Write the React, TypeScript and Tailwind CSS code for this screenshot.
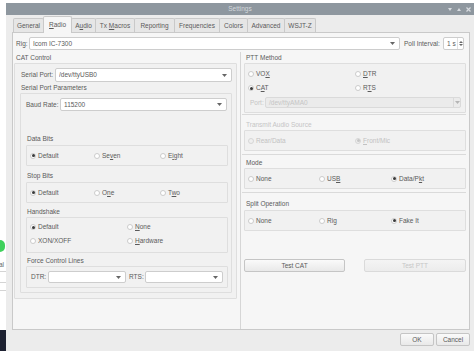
import React from "react";

const tabs = [
  { t: "General", w: 31 },
  { t: "Radio", w: 29, u: 0, active: true },
  { t: "Audio", w: 25, u: 1 },
  { t: "Tx Macros", w: 40, u: 3 },
  { t: "Reporting", w: 41 },
  { t: "Frequencies", w: 46 },
  { t: "Colors", w: 29 },
  { t: "Advanced", w: 38 },
  { t: "WSJT-Z", w: 32 },
];

function Mn({ t, u }: { t: string; u?: number }) {
  if (u === undefined) return <span className="whitespace-pre">{t}</span>;
  return (
    <span className="whitespace-pre">
      {t.slice(0, u)}
      <span className="underline underline-offset-1">{t[u]}</span>
      {t.slice(u + 1)}
    </span>
  );
}

function Caret({ light }: { light?: boolean }) {
  return (
    <svg width="5" height="3" viewBox="0 0 5 3" className="shrink-0">
      <path d="M0 0 L5 0 L2.5 3 Z" fill={light ? "#b5b5b5" : "#666"} />
    </svg>
  );
}

function Combo({ value, className }: { value?: string; className: string }) {
  return (
    <div
      className={`flex items-center bg-white border border-[#cdcdcd] rounded-[2px] pl-[3px] pr-[4px] ${className}`}
    >
      <span className="flex-1 truncate">{value}</span>
      <Caret />
    </div>
  );
}

function Radio({
  t,
  u,
  checked,
  disabled,
  className = "",
}: {
  t: string;
  u?: number;
  checked?: boolean;
  disabled?: boolean;
  className?: string;
}) {
  return (
    <div className={`flex items-center gap-[2px] h-[12px] ${disabled ? "text-[#c2c2c2]" : ""} ${className}`}>
      <span
        className={`w-[6px] h-[6px] rounded-full border flex items-center justify-center ${
          disabled ? "border-[#d6d6d6] bg-[#efefef]" : "border-[#cbcbcb] bg-white"
        }`}
      >
        {checked && (
          <span className={`w-[3px] h-[3px] rounded-full ${disabled ? "bg-[#c6c6c6]" : "bg-[#3a3a3a]"}`} />
        )}
      </span>
      <Mn t={t} u={u} />
    </div>
  );
}

function Label({ children, className = "" }: { children: React.ReactNode; className?: string }) {
  return <div className={`h-[10px] leading-[10px] ${className}`}>{children}</div>;
}

function Frame({ children, className = "" }: { children: React.ReactNode; className?: string }) {
  return (
    <div className={`border border-[#dedede] rounded-[1px] bg-[#f1f1f1] ${className}`}>{children}</div>
  );
}

function Button({ children, className = "", disabled }: { children: React.ReactNode; className?: string; disabled?: boolean }) {
  return (
    <div
      className={`h-[13px] flex items-center justify-center border rounded-[2px] bg-gradient-to-b ${
        disabled
          ? "from-[#f4f4f4] to-[#ececec] border-[#dadada] text-[#c6c6c6]"
          : "from-[#fafafa] to-[#e9e9e9] border-[#c5c5c5]"
      } ${className}`}
    >
      {children}
    </div>
  );
}

export default function App() {
  return (
    <div className="relative w-[474px] h-[351px] overflow-hidden bg-white font-['Liberation_Sans',Arial,sans-serif] text-[6.5px] text-[#5a5a5a]">
      {/* desktop behind the dialog */}
      <div className="absolute left-[-5px] top-[240px] w-[10px] h-[12px] rounded-full bg-[#3fd15c]" />
      <div className="absolute left-[-1px] top-[260px] text-[#666]">al</div>
      <div className="absolute left-0 top-[271px] w-[6px] h-[1px] bg-[#d4d4d4]" />
      <div className="absolute left-0 top-[282px] w-[6px] h-[1px] bg-[#d4d4d4]" />
      <div className="absolute left-0 top-[290px] w-[6px] h-[1px] bg-[#d4d4d4]" />
      <div className="absolute left-0 top-[330px] w-[6px] h-[21px] bg-[#1d2131]" />

      {/* dialog window */}
      <div className="absolute left-[6px] top-[3px] w-[468px] h-[348px] flex flex-col bg-[#ececec]">
        <div className="relative h-[12px] bg-[#8e979f] flex items-center justify-center text-[#d3d8dc]">
          Settings
          <div className="absolute right-[3px] top-0 h-[12px] flex items-center gap-[5px]">
            <svg width="4" height="3" viewBox="0 0 4 3">
              <path d="M0 0 L4 0 L2 3 Z" fill="#d6dadf" />
            </svg>
            <svg width="4" height="3" viewBox="0 0 4 3">
              <path d="M0 3 L4 3 L2 0 Z" fill="#d6dadf" />
            </svg>
            <svg width="5" height="5" viewBox="0 0 5 5">
              <path d="M0.5 0.5 L4.5 4.5 M4.5 0.5 L0.5 4.5" stroke="#d6dadf" strokeWidth="1.2" />
            </svg>
          </div>
        </div>

        {/* tab bar */}
        <div className="h-[17px] pl-[7px] flex items-end">
          {tabs.map((tab) => (
            <div
              key={tab.t}
              style={{ width: tab.w }}
              className={`flex items-center justify-center border border-[#c9c9c9] rounded-t-[2px] -mr-[1px] ${
                tab.active
                  ? "h-[17px] bg-[#f6f6f6] border-b-0 relative z-10 -mb-[1px] pb-[1px]"
                  : "h-[14px] bg-[#e6e6e6] border-b-0"
              }`}
            >
              <Mn t={tab.t} u={tab.u} />
            </div>
          ))}
        </div>

        {/* tab pane */}
        <div className="ml-[6px] w-[458px] h-[298px] border border-[#c9c9c9] bg-[#f6f6f6] flex flex-col">
          <div className="mt-[4px] h-[13px] flex items-center pl-[3px]">
            <span className="w-[13px]">Rig:</span>
            <Combo value="Icom IC-7300" className="w-[371px] h-[13px]" />
            <span className="ml-[4px] w-[39px]">Poll Interval:</span>
            <div className="w-[21px] h-[13px] bg-white border border-[#cdcdcd] rounded-[2px] flex items-center pl-[3px]">
              <span className="flex-1">1 s</span>
              <div className="w-[6px] h-full border-l border-[#e0e0e0] flex flex-col items-center justify-center gap-[1px]">
                <svg width="4" height="2" viewBox="0 0 4 2">
                  <path d="M0 2 L4 2 L2 0 Z" fill="#666" />
                </svg>
                <svg width="4" height="2" viewBox="0 0 4 2">
                  <path d="M0 0 L4 0 L2 2 Z" fill="#666" />
                </svg>
              </div>
            </div>
          </div>

          <div className="mt-[2px] flex flex-1">
            {/* left column */}
            <div className="w-[227px] flex flex-col">
              <div className="h-[11px] leading-[11px] pl-[3px]">CAT Control</div>
              <Frame className="ml-[1px] w-[223px] h-[236px] flex flex-col">
                <div className="mt-[4px] h-[14px] flex items-center pl-[6px]">
                  <span className="w-[34px]">Serial Port:</span>
                  <Combo value="/dev/ttyUSB0" className="w-[177px] h-[14px]" />
                </div>
                <Label className="mt-[1px] pl-[6px]">Serial Port Parameters</Label>
                <Frame className="ml-[5px] w-[212px] h-[200px] flex flex-col">
                  <div className="mt-[4px] h-[13px] flex items-center pl-[5px]">
                    <span className="w-[34px]">Baud Rate:</span>
                    <Combo value="115200" className="w-[167px] h-[13px]" />
                  </div>

                  <Label className="mt-[23px] pl-[6px]">Data Bits</Label>
                  <Frame className="mt-[1px] ml-[5px] w-[202px] h-[21px] flex items-center pl-[3px]">
                    <Radio t="Default" checked className="w-[64px]" />
                    <Radio t="Seven" u={2} className="w-[66px]" />
                    <Radio t="Eight" u={1} />
                  </Frame>

                  <Label className="mt-[5px] pl-[6px]">Stop Bits</Label>
                  <Frame className="mt-[1px] ml-[5px] w-[202px] h-[21px] flex items-center pl-[3px]">
                    <Radio t="Default" checked className="w-[64px]" />
                    <Radio t="One" u={1} className="w-[66px]" />
                    <Radio t="Two" u={1} />
                  </Frame>

                  <Label className="mt-[4px] pl-[6px]">Handshake</Label>
                  <Frame className="ml-[5px] w-[202px] h-[36px] flex flex-col pl-[3px]">
                    <div className="mt-[3px] flex">
                      <Radio t="Default" checked className="w-[97px]" />
                      <Radio t="None" u={0} />
                    </div>
                    <div className="mt-[2px] flex">
                      <Radio t="XON/XOFF" className="w-[97px]" />
                      <Radio t="Hardware" u={0} />
                    </div>
                  </Frame>

                  <Label className="mt-[3px] pl-[6px]">Force Control Lines</Label>
                  <Frame className="ml-[5px] w-[202px] h-[22px] flex items-center pl-[4px]">
                    <span className="w-[17px]">DTR:</span>
                    <Combo className="w-[78px] h-[12px]" />
                    <span className="ml-[3px] w-[16px]">RTS:</span>
                    <Combo className="w-[78px] h-[12px]" />
                  </Frame>
                </Frame>
              </Frame>
            </div>

            {/* right column */}
            <div className="flex-1 border-l border-[#d6d6d6] pl-[3px] pr-[2px] flex flex-col">
              <div className="h-[11px] leading-[11px] pl-[2px]">PTT Method</div>
              <Frame className="w-[222px] h-[50px] flex flex-col pl-[3px]">
                <div className="mt-[4px] flex">
                  <Radio t="VOX" u={2} className="w-[107px]" />
                  <Radio t="DTR" u={0} />
                </div>
                <div className="mt-[2px] flex">
                  <Radio t="CAT" checked u={1} className="w-[107px]" />
                  <Radio t="RTS" u={1} />
                </div>
                <div className="mt-[3px] h-[11px] flex items-center pl-[2px] text-[#c5c5c5]">
                  <span className="w-[15px]">Port:</span>
                  <div className="w-[196px] h-[11px] flex items-center border border-[#dadada] rounded-[2px] bg-[#ebebeb] pl-[3px]">
                    <span className="flex-1">/dev/ttyAMA0</span>
                    <div className="w-[7px] h-full border-l border-[#dadada] flex items-center justify-center">
                      <Caret light />
                    </div>
                  </div>
                </div>
              </Frame>
              <div className="mt-[1px] -ml-[2px] w-[224px] h-[1px] bg-[#dadada]" />

              <Label className="mt-[5px] pl-[2px] text-[#c5c5c5]">Transmit Audio Source</Label>
              <Frame className="w-[222px] h-[21px] flex items-center pl-[3px]">
                <Radio t="Rear/Data" disabled className="w-[107px]" />
                <Radio t="Front/Mic" u={0} checked disabled />
              </Frame>
              <div className="mt-[3px] -ml-[2px] w-[224px] h-[1px] bg-[#dadada]" />

              <Label className="mt-[3px] pl-[2px]">Mode</Label>
              <Frame className="w-[222px] h-[21px] flex items-center pl-[3px]">
                <Radio t="None" className="w-[71px]" />
                <Radio t="USB" u={2} className="w-[72px]" />
                <Radio t="Data/Pkt" u={6} checked />
              </Frame>
              <div className="mt-[3px] -ml-[2px] w-[224px] h-[1px] bg-[#dadada]" />

              <Label className="mt-[6px] pl-[2px]">Split Operation</Label>
              <Frame className="mt-[1px] w-[222px] h-[21px] flex items-center pl-[3px]">
                <Radio t="None" className="w-[71px]" />
                <Radio t="Rig" className="w-[72px]" />
                <Radio t="Fake It" checked />
              </Frame>

              <div className="mt-[28px] w-[222px] flex justify-between">
                <Button className="w-[101px]">Test CAT</Button>
                <Button className="w-[102px]" disabled>
                  Test PTT
                </Button>
              </div>
            </div>
          </div>
        </div>

        {/* dialog buttons */}
        <div className="flex-1 flex justify-end items-start pt-[3px] pr-[4px] gap-[2px]">
          <Button className="w-[34px] border-[#a3b6c9]">OK</Button>
          <Button className="w-[34px]">Cancel</Button>
        </div>
      </div>
    </div>
  );
}
